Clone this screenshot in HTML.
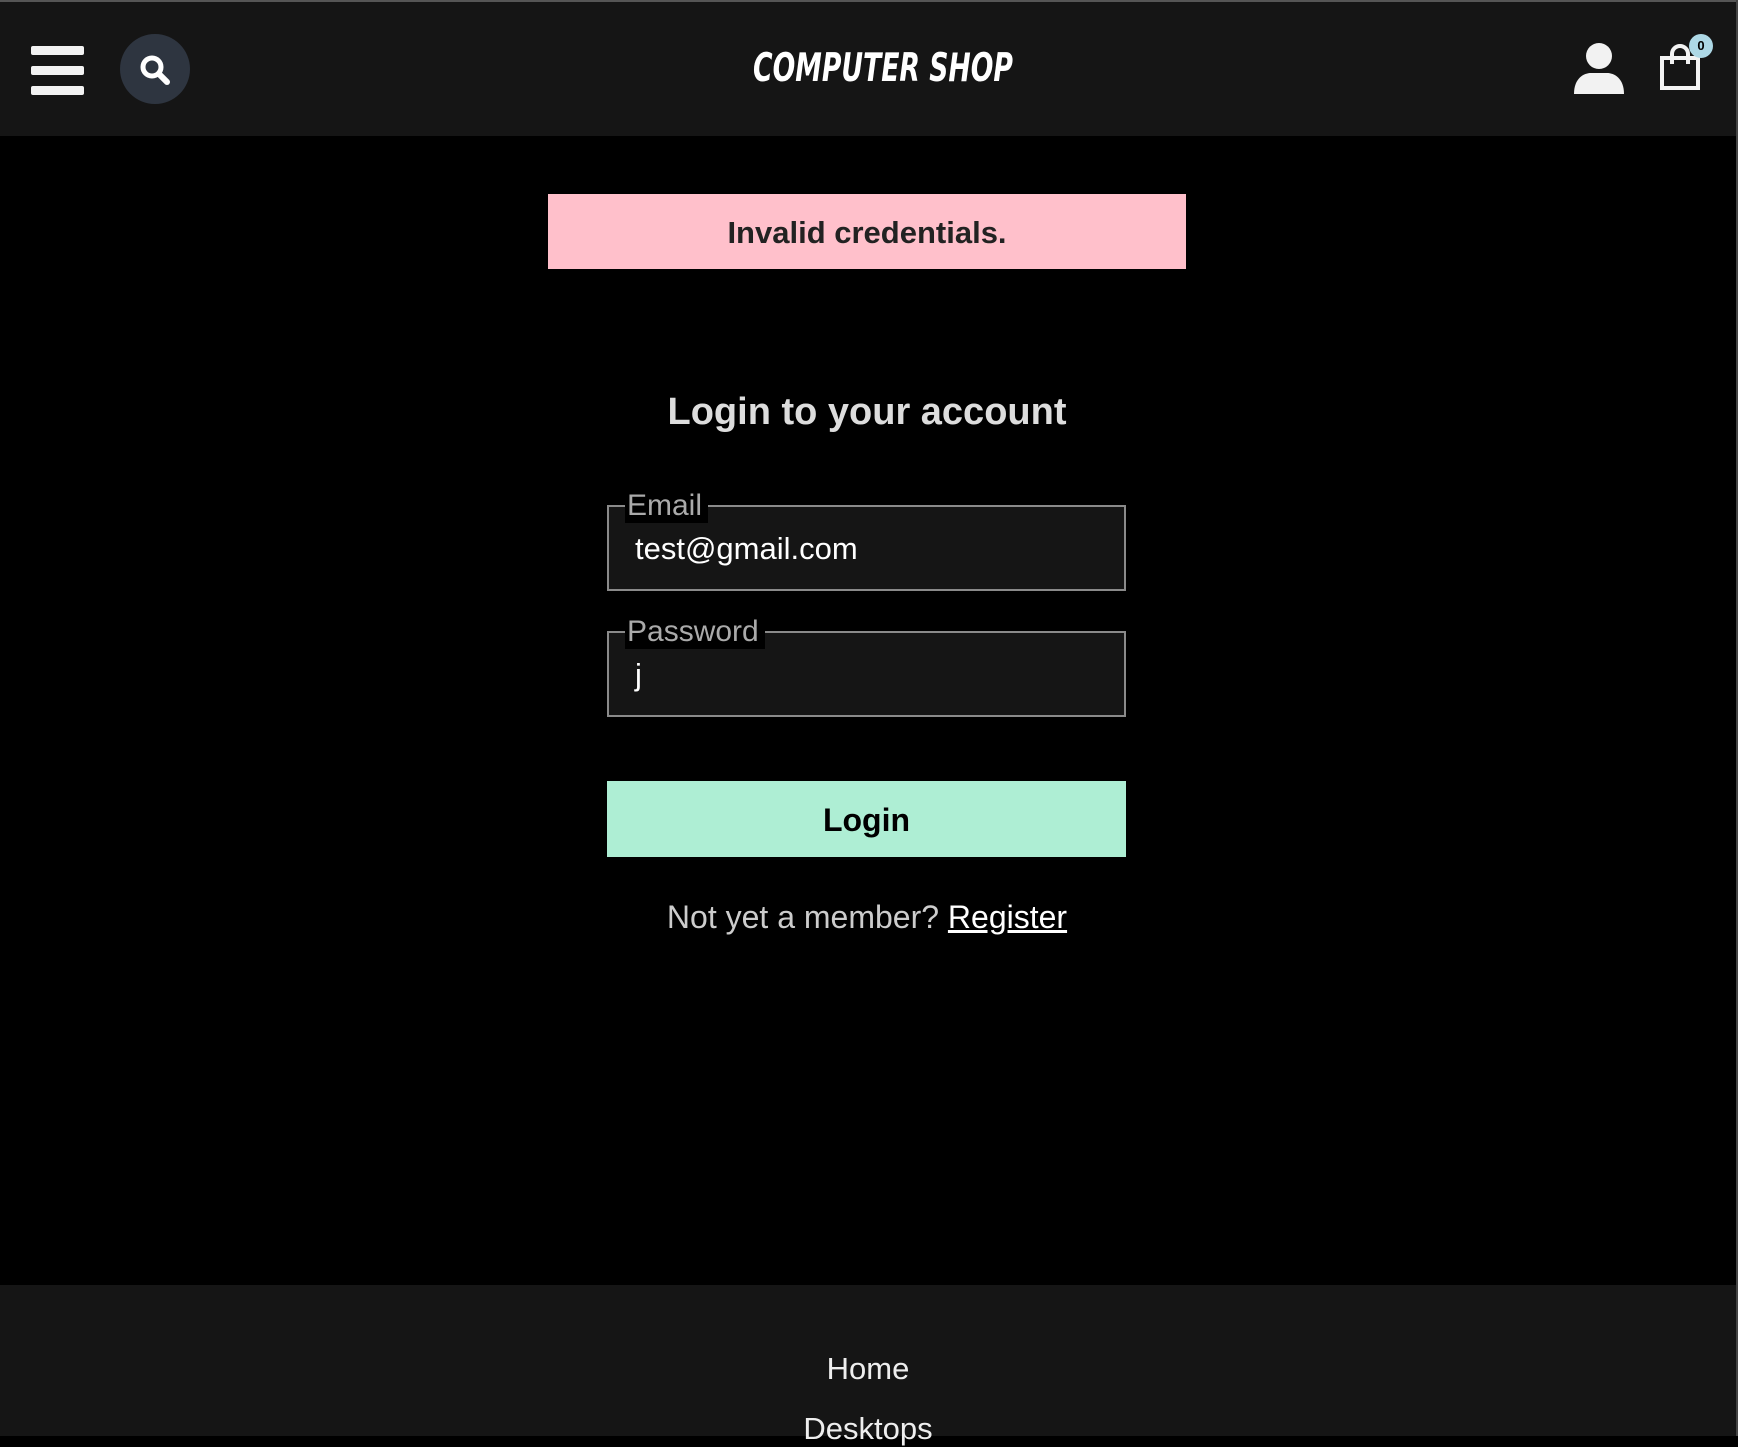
<!DOCTYPE html>
<html><head><meta charset="utf-8"><style>
*{margin:0;padding:0;box-sizing:border-box}
html,body{width:1738px;height:1436px;overflow:hidden;background:#000;font-family:"Liberation Sans",sans-serif}
.hdr{position:absolute;left:0;top:0;width:1738px;height:136px;background:#151515;border-top:2px solid #555}
.abs{position:absolute}
.title{position:absolute;left:0;width:1766px;top:44px;text-align:center;font-family:"DejaVu Sans Condensed","Liberation Sans Narrow",sans-serif;font-weight:bold;font-style:italic;font-size:39px;color:#fff;transform:scaleX(0.76)}
.alert{position:absolute;left:548px;top:194px;width:638px;height:75px;background:#ffc0cb;color:#222;font-weight:bold;font-size:31px;text-align:center;line-height:77px}
h1{position:absolute;left:0;width:1734px;top:391px;text-align:center;color:#ddd;font-size:38px;font-weight:bold}
.box{position:absolute;left:607px;width:519px;height:86px;border:2px solid #8a8a8a;background:#151515}
.lg{position:absolute;left:16px;top:-18px;background:#000;padding:0 6px 0 2px;color:#aaa;font-size:30px;line-height:34px}
.val{position:absolute;left:26px;top:24px;color:#fff;font-size:31px}
.btn{position:absolute;left:607px;top:781px;width:519px;height:76px;background:#aeeed4;color:#000;font-weight:bold;font-size:32px;text-align:center;line-height:78px}
.reg{position:absolute;left:0;width:1734px;top:899px;text-align:center;color:#ccc;font-size:32px}
.reg u{color:#fff}
.ftr{position:absolute;left:0;top:1285px;width:1736px;height:151px;background:#151515;color:#eee;font-size:31px;text-align:center}
.rb{position:absolute;right:0;top:0;width:2px;height:1436px;background:#444}
</style></head><body>
<div class="hdr">
 <div class="abs" style="left:31px;top:44px;width:53px;height:9px;background:#f2f2f2;border-radius:2px"></div>
 <div class="abs" style="left:31px;top:64px;width:53px;height:9px;background:#f2f2f2;border-radius:2px"></div>
 <div class="abs" style="left:31px;top:84px;width:53px;height:9px;background:#f2f2f2;border-radius:2px"></div>
 <div class="abs" style="left:120px;top:32px;width:70px;height:70px;border-radius:50%;background:#2e3540"></div>
 <svg class="abs" style="left:138px;top:51px" width="34" height="34" viewBox="0 0 34 34"><circle cx="14" cy="14" r="9" stroke="#fff" stroke-width="5" fill="none"/><line x1="21" y1="21" x2="29" y2="29" stroke="#fff" stroke-width="6" stroke-linecap="round"/></svg>
 <div class="title">COMPUTER SHOP</div>
 <svg class="abs" style="left:1572px;top:40px" width="54" height="54" viewBox="0 0 54 54"><circle cx="27" cy="14" r="13" fill="#f2f2f2"/><path d="M2 52 C2 36 12 31 19 31 L35 31 C42 31 52 36 52 52 Z" fill="#f2f2f2"/></svg>
 <svg class="abs" style="left:1658px;top:40px" width="46" height="50" viewBox="0 0 46 50"><path d="M4 16 H40 V46 H4 Z" stroke="#f2f2f2" stroke-width="4" fill="none"/><path d="M14 22 V12 A8 8 0 0 1 30 12 V22" stroke="#f2f2f2" stroke-width="4" fill="none"/></svg>
 <div class="abs" style="left:1689px;top:32px;width:24px;height:24px;border-radius:50%;background:#add8e6;color:#000;font-size:13px;text-align:center;line-height:24px;font-weight:bold">0</div>
</div>
<div class="alert">Invalid credentials.</div>
<h1>Login to your account</h1>
<div class="box" style="top:505px"><span class="lg">Email</span><span class="val">test@gmail.com</span></div>
<div class="box" style="top:631px"><span class="lg">Password</span><span class="val">j</span></div>
<div class="btn">Login</div>
<div class="reg">Not yet a member? <u>Register</u></div>
<div class="ftr"><div style="position:absolute;width:100%;top:66px">Home</div><div style="position:absolute;width:100%;top:126px">Desktops</div></div>
<div class="rb"></div>
</body></html>
